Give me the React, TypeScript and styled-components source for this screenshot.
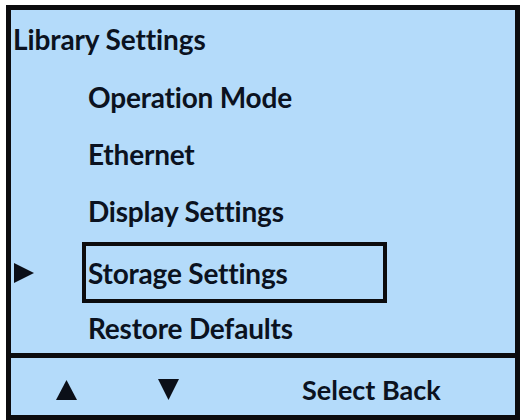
import styled, { createGlobalStyle } from "styled-components";

const GlobalStyle = createGlobalStyle`
  html, body {
    margin: 0;
    padding: 0;
    background: #ffffff;
  }
  body {
    font-family: Lato, "Open Sans", "Noto Sans", sans-serif;
  }
`;

const menuItems = [
  "Operation Mode",
  "Ethernet",
  "Display Settings",
  "Storage Settings",
  "Restore Defaults",
];

const selectedIndex = 3;

const App = () => {
  return (
    <>
      <GlobalStyle />
      <Screen>
        <MenuArea>
          <Title>Library Settings</Title>
          {menuItems.map((item, i) => (
            <MenuRow key={item} $selected={i === selectedIndex} $last={i === menuItems.length - 1}>
              <Marker>
                {i === selectedIndex && (
                  <svg width="22" height="22" viewBox="0 0 22 22">
                    <polygon points="1,1 21,11 1,21" fill="#0b0f18" />
                  </svg>
                )}
              </Marker>
              <ItemLabel $selected={i === selectedIndex}>{item}</ItemLabel>
            </MenuRow>
          ))}
        </MenuArea>
        <Footer>
          <KeyIcon $gap={44}>
            <svg width="23" height="22" viewBox="0 0 23 22">
              <polygon points="11.5,1 22,21 1,21" fill="#0b0f18" />
            </svg>
          </KeyIcon>
          <KeyIcon $gap={79}>
            <svg width="23" height="23" viewBox="0 0 23 23">
              <polygon points="1,1 22,1 11.5,22" fill="#0b0f18" />
            </svg>
          </KeyIcon>
          <SoftKeys>Select Back</SoftKeys>
        </Footer>
      </Screen>
    </>
  );
};

const Screen = styled.div`
  box-sizing: border-box;
  margin: 5px 0 0 6px;
  width: 514px;
  height: 415px;
  border: 5px solid #0c0c0e;
  background: #b4dbfa;
  display: flex;
  flex-direction: column;
  color: #0b1220;
`;

const MenuArea = styled.div`
  flex: 1;
  padding-top: 1px;
  display: flex;
  flex-direction: column;
`;

const Title = styled.div`
  height: 57px;
  line-height: 57px;
  padding-left: 2px;
  font-size: 28px;
  font-weight: 700;
  letter-spacing: -0.1px;
`;

const MenuRow = styled.div<{ $selected: boolean; $last: boolean }>`
  display: flex;
  align-items: center;
  height: ${(p) => (p.$selected ? "61px" : p.$last ? "50px" : "57px")};
  margin-top: ${(p) => (p.$selected ? "3px" : "0")};
`;

const Marker = styled.div`
  width: 71px;
  padding-left: 2px;
  box-sizing: border-box;
  display: flex;
  align-items: center;
`;

const ItemLabel = styled.div<{ $selected: boolean }>`
  box-sizing: border-box;
  width: 305px;
  height: 100%;
  display: flex;
  align-items: center;
  padding-left: 2px;
  border: 4px solid ${(p) => (p.$selected ? "#0c0c0e" : "transparent")};
  font-size: 28px;
  font-weight: 700;
  letter-spacing: -0.2px;
  white-space: nowrap;
`;

const Footer = styled.div`
  height: 53px;
  border-top: 5px solid #0c0c0e;
  display: flex;
  align-items: center;
  padding-top: 6px;
  box-sizing: content-box;
`;

const KeyIcon = styled.div<{ $gap: number }>`
  margin-left: ${(p) => p.$gap}px;
  display: flex;
  align-items: center;
`;

const SoftKeys = styled.div`
  margin-left: 122px;
  font-size: 27px;
  font-weight: 700;
`;

export default App;
